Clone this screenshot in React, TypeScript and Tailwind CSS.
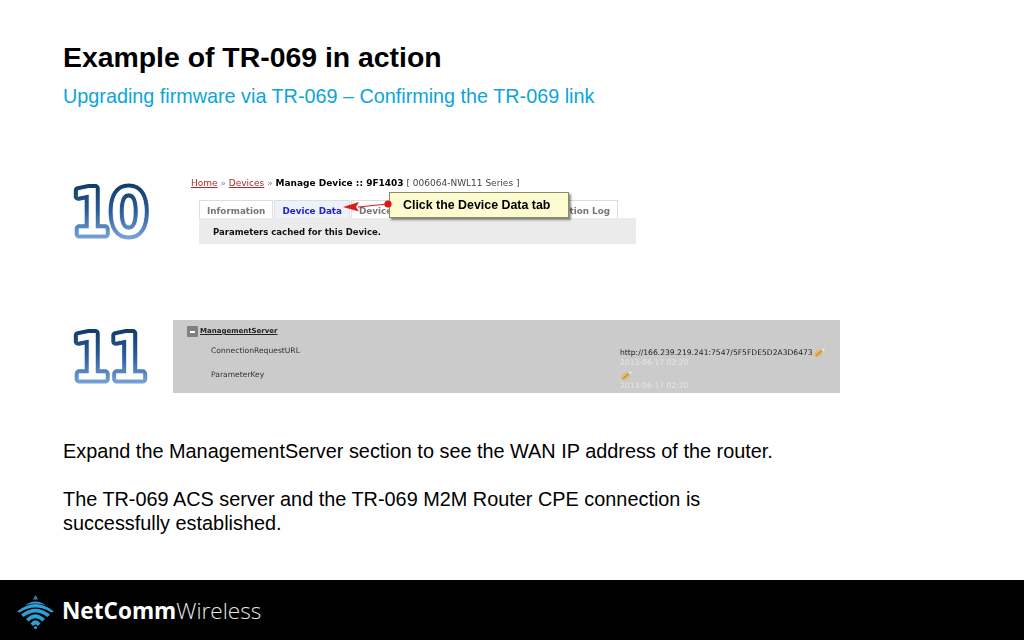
import React from "react";

function Num({ id, text }: { id: string; text: string }) {
  const common = {
    x: 46,
    y: 60,
    textAnchor: "middle" as const,
    fontFamily: "'DejaVu Sans', sans-serif",
    fontSize: 62,
    letterSpacing: -2,
  };
  return (
    <svg width="96" height="72" viewBox="0 0 96 72" className="block shrink-0 blur-[0.4px]">
      <defs>
        <linearGradient id={id} gradientUnits="userSpaceOnUse" x1="0" y1="10" x2="0" y2="66">
          <stop offset="0" stopColor="#123a66" />
          <stop offset="0.5" stopColor="#2c5f9c" />
          <stop offset="1" stopColor="#7ba7dc" />
        </linearGradient>
      </defs>
      <text {...common} fill="#ffffff" stroke={`url(#${id})`} strokeWidth="9" strokeLinejoin="round">
        {text}
      </text>
      <text {...common} fill="#ffffff" stroke="#ffffff" strokeWidth="0.8" aria-hidden="true">
        {text}
      </text>
    </svg>
  );
}

function Tab({ children, active }: { children: React.ReactNode; active?: boolean }) {
  return (
    <div
      className={`h-[18px] border border-b-0 border-[#dddddd] px-[7px] text-[8.8px] font-bold leading-[20px] whitespace-nowrap ${
        active ? "bg-[#eef2f8] text-[#2222cc]" : "bg-white text-[#777777]"
      }`}
    >
      {children}
    </div>
  );
}

function Pencil() {
  return (
    <svg width="12" height="10" viewBox="0 0 12 10" className="inline-block shrink-0">
      <ellipse cx="5.5" cy="5.5" rx="5" ry="3.2" transform="rotate(-35 5.5 5.5)" fill="#dcbc6e" />
      <path d="M3 7.5 L8.5 3" stroke="#8c6d28" strokeWidth="0.8" />
      <path d="M8.5 1 L11.5 0.5 L11 3.5 Z" fill="#f6eec8" />
    </svg>
  );
}

function Logo() {
  return (
    <svg width="40" height="36" viewBox="0 0 40 36" className="block shrink-0">
      <g fill="#2f9fd6">
        <path d="M19.5 1 L22 5.5 H17 Z" fill="#2b86b4" />
        <path d="M9 11.5 Q19.5 3.5 30 11.5 Q19.5 7.5 9 11.5 Z" />
        <path d="M1 17.5 Q19.5 2.5 38 17.5 L35.5 18.5 Q19.5 8.5 3.5 18.5 Z" />
        <path d="M5 20.5 Q19.5 9 34 20.5 L31.5 23 Q19.5 14 7.5 23 Z" />
        <path d="M10 25 Q19.5 15.5 29 25 L26.5 27.5 Q19.5 21 12.5 27.5 Z" />
        <path d="M14.5 29.5 Q19.5 23 24.5 29.5 L22 32 Q19.5 29 17 32 Z" />
        <circle cx="19.5" cy="33.5" r="1.6" />
      </g>
    </svg>
  );
}

export default function App() {
  return (
    <div className="flex h-[640px] w-[1024px] flex-col overflow-hidden bg-white font-['Liberation_Sans',Arial,sans-serif]">
      <main className="flex-1 pl-[63px]">
        <h1 className="mt-[39px] text-[28.4px] font-bold leading-[36px] text-black">Example of TR-069 in action</h1>
        <p className="mt-[9px] text-[19.8px] leading-[24px] text-[#0ba5dc]">Upgrading firmware via TR-069 – Confirming the TR-069 link</p>

        <section className="mt-[64px] flex h-[103px] items-start">
          <div className="mt-[2px] w-[128px]">
            <Num id="g10" text="10" />
          </div>
          <div className="w-[445px] font-['DejaVu_Sans',sans-serif] blur-[0.3px]">
            <div className="pt-[4px] text-[9px] leading-[14px] whitespace-nowrap text-black">
              <span className="text-[#b02a2a] underline">Home</span>
              <span className="text-[#888888]"> » </span>
              <span className="text-[#b02a2a] underline">Devices</span>
              <span className="text-[#888888]"> » </span>
              <span className="font-bold">Manage Device :: 9F1403</span>
              <span className="text-[#444444]"> [ 006064-NWL11 Series ]</span>
            </div>
            <div className="relative ml-[8px] mt-[10px]">
              <div className="flex justify-between pr-[18px]">
                <div className="flex gap-[1px]">
                  <Tab>Information</Tab>
                  <Tab active>Device Data</Tab>
                  <Tab>Device</Tab>
                </div>
                <Tab>Notification Log</Tab>
              </div>
              <div className="h-[26px] bg-[#ebebeb] pl-[14px] text-[8.5px] font-bold leading-[28px] text-[#111111]">
                Parameters cached for this Device.
              </div>
              <div className="absolute left-[190px] top-[-8px] flex h-[26px] w-[180px] items-center border border-[#8f8b62] bg-[#fdfbd0] pl-[13px] font-['Liberation_Sans',sans-serif] text-[12.4px] font-bold text-black shadow-[2px_2px_2px_rgba(0,0,0,0.45)]">
                Click the Device Data tab
              </div>
              <svg width="52" height="12" viewBox="0 0 52 12" className="absolute left-[143px] top-[0px]">
                <path d="M46 4 L16 7" stroke="#d42020" strokeWidth="1.2" />
                <path d="M1 7 L17 2 L14 7 L17 11.5 Z" fill="#d91e1e" />
                <circle cx="46" cy="4" r="3.6" fill="#e01515" />
              </svg>
            </div>
          </div>
        </section>

        <section className="mt-[45px] flex items-start">
          <div className="mt-[-1px] w-[110px]">
            <Num id="g11" text="11" />
          </div>
          <div className="flex h-[73px] w-[667px] justify-between bg-[#cbcbcb] font-['DejaVu_Sans',sans-serif] text-[7.6px] blur-[0.3px]">
            <div className="pl-[14px] pt-[6px]">
              <div className="flex items-center gap-[2px] leading-[11px]">
                <span className="flex h-[11px] w-[11px] items-center justify-center rounded-[1px] bg-[#808080]">
                  <span className="h-[2px] w-[5px] bg-white" />
                </span>
                <span className="text-[7px] font-bold text-[#222222] underline">ManagementServer</span>
              </div>
              <div className="mt-[8px] pl-[24px] leading-[11px] text-[#333333]">ConnectionRequestURL</div>
              <div className="mt-[13px] pl-[24px] leading-[11px] text-[#333333]">ParameterKey</div>
            </div>
            <div className="w-[220px] pt-[28px] leading-[10px]">
              <div className="flex items-center text-[#222222]">
                http://166.239.219.241:7547/5F5FDE5D2A3D6473
                <Pencil />
              </div>
              <div className="text-[#e6e6e6]">2013-06-17 02:20</div>
              <div className="mt-[2px] flex h-[11px] items-center">
                <Pencil />
              </div>
              <div className="text-[#e6e6e6]">2013-06-17 02:20</div>
            </div>
          </div>
        </section>

        <div className="mt-[46px] w-[720px] text-[19.87px] leading-[24px] text-black">
          <p>Expand the ManagementServer section to see the WAN IP address of the router.</p>
          <p className="mt-[24px] w-[680px]">The TR-069 ACS server and the TR-069 M2M Router CPE connection is successfully established.</p>
        </div>
      </main>
      <footer className="flex h-[60px] items-center bg-black pl-[16px] pt-[3px]">
        <Logo />
        <div className="ml-[6px] whitespace-nowrap font-['Open_Sans',sans-serif] text-[22.6px] leading-none text-white">
          <span className="font-bold">NetComm</span>
          <span className="font-light text-[#e6e6e6]">Wireless</span>
        </div>
      </footer>
    </div>
  );
}
